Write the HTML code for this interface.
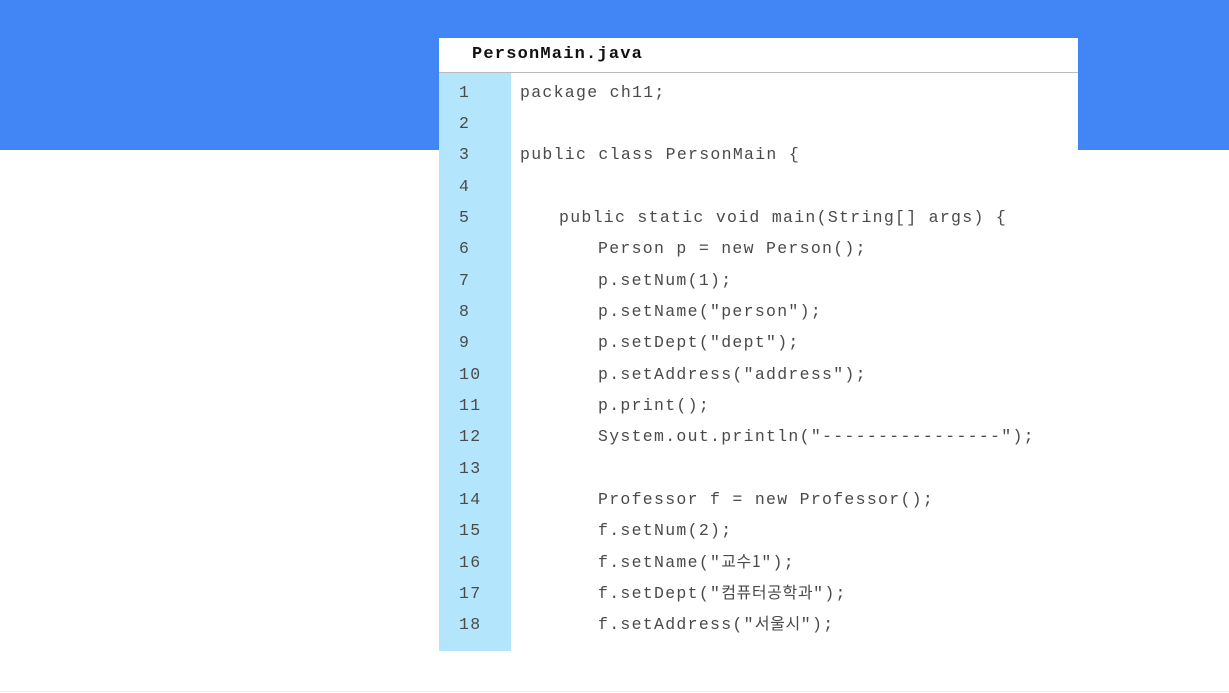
<!DOCTYPE html>
<html><head><meta charset="utf-8"><style>
body{margin:0;width:1229px;height:693px;background:#fff;position:relative;overflow:hidden}
.band{position:absolute;left:0;top:0;width:1229px;height:150px;background:#4285f4}
.card{position:absolute;left:439px;top:38px;width:639px;height:613px;background:#fff}
.hd{height:34px;border-bottom:1px solid #bbb;font:bold 17px "Liberation Mono",monospace;letter-spacing:1.2px;color:#111;padding-left:33px;line-height:33px}
.gut{position:absolute;left:0;top:35px;width:72px;bottom:0;background:#b3e5fc}
.ln{position:absolute;left:0;height:31.35px;line-height:31.35px;font:16.5px "Liberation Mono","Noto Sans CJK KR",monospace;color:#4a4a4a;white-space:pre;letter-spacing:1.3px}
.ln span{line-height:0;font-family:"Noto Sans CJK KR",sans-serif;font-size:16px;letter-spacing:0.6px}
.n{left:20px}
.bot{position:absolute;left:0;top:691px;width:1229px;height:1px;background:#eee}
</style></head><body>
<div class="band"></div>
<div class="card">
<div class="hd">PersonMain.java</div>
<div class="gut"></div>
<div id="code"></div>
</div>
<div class="bot"></div>
<script>
var L=[[0,"package ch11;"],[0,""],[0,"public class PersonMain {"],[0,""],[1,"public static void main(String[] args) {"],[2,"Person p = new Person();"],[2,"p.setNum(1);"],[2,"p.setName(\"person\");"],[2,"p.setDept(\"dept\");"],[2,"p.setAddress(\"address\");"],[2,"p.print();"],[2,"System.out.println(\"----------------\");"],[0,""],[2,"Professor f = new Professor();"],[2,"f.setNum(2);"],[2,"f.setName(\"교수1\");"],[2,"f.setDept(\"컴퓨터공학과\");"],[2,"f.setAddress(\"서울시\");"]];
var h="";L.forEach(function(l,i){var t=44.5+i*31.35;
h+='<div class="ln n" style="top:'+t+'px">'+(i+1)+'</div>';
var s=l[1].replace(/&/g,"&amp;").replace(/</g,"&lt;").replace(/([\uAC00-\uD7A3]+1?)/g,'<span>$1</span>');
h+='<div class="ln" style="top:'+t+'px;left:'+(81+l[0]*39)+'px">'+s+'</div>';});
document.getElementById("code").innerHTML=h;
</script>
</body></html>
